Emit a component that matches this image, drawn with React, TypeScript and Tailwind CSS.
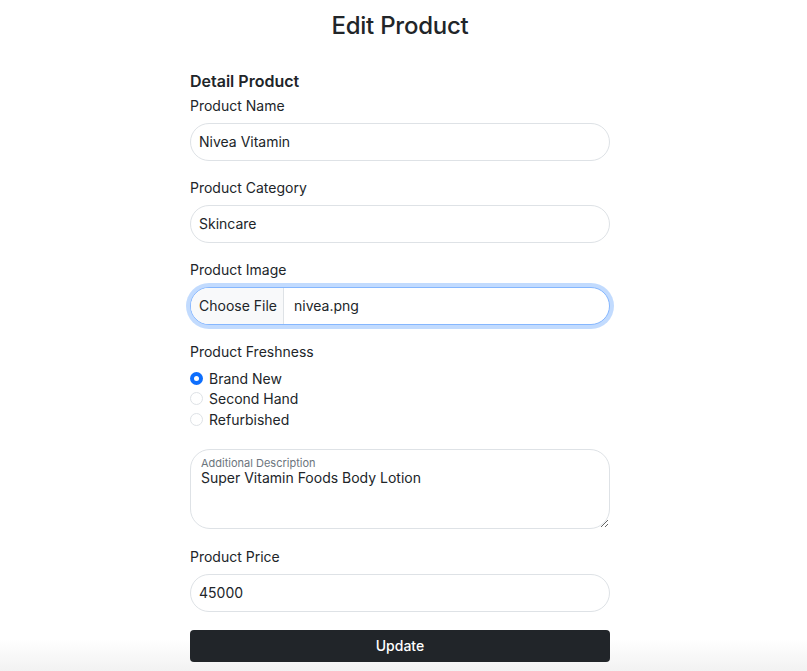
import { useState } from "react";

const font = { fontFamily: "Inter, 'Noto Sans', sans-serif" };

const freshnessOptions = ["Brand New", "Second Hand", "Refurbished"];

function FieldLabel({ children }: { children: React.ReactNode }) {
  return <p className="mb-[7px] text-[14px] leading-[20px] text-[#212529]">{children}</p>;
}

function TextField({ value }: { value: string }) {
  return (
    <div className="flex h-[38px] items-center rounded-full border border-[#dee2e6] bg-white px-[8px] pb-px text-[14px] text-[#212529]">
      {value}
    </div>
  );
}

export default function App() {
  const [freshness, setFreshness] = useState("Brand New");

  return (
    <div className="relative min-h-[671px] bg-white pr-[7px] text-[#212529]" style={font}>
      <div className="pointer-events-none absolute inset-x-0 bottom-0 h-[32px] bg-linear-to-b from-white/0 to-[#f2f2f2]" />

      <div className="relative z-10 mx-auto w-[420px] pt-[8px]">
        <h1 className="text-center text-[24px] font-medium leading-[36px] tracking-[-0.01em]">Edit Product</h1>

        <h2 className="mt-[25px] text-[16px] font-semibold leading-[24px]">Detail Product</h2>

        <div className="mt-[3px] flex flex-col gap-[17px]">
          <div>
            <FieldLabel>Product Name</FieldLabel>
            <TextField value="Nivea Vitamin" />
          </div>

          <div>
            <FieldLabel>Product Category</FieldLabel>
            <TextField value="Skincare" />
          </div>

          <div>
            <FieldLabel>Product Image</FieldLabel>
            <div className="flex h-[38px] items-stretch overflow-hidden rounded-full border border-[#86b7fe] bg-white text-[14px] shadow-[0_0_0_4px_rgba(13,110,253,0.25)]">
              <span className="flex items-center border-r border-[#dee2e6] bg-[#f8f9fa] pb-px pl-[8px] pr-[6px]">Choose File</span>
              <span className="flex items-center pb-px pl-[10px]">nivea.png</span>
            </div>
          </div>

          <div>
            <FieldLabel>Product Freshness</FieldLabel>
            <div className="-mt-px flex flex-col">
              {freshnessOptions.map((opt) => {
                const checked = freshness === opt;
                return (
                  <label
                    key={opt}
                    className="flex h-[20.5px] cursor-pointer items-center gap-[6px] text-[14px]"
                    onClick={() => setFreshness(opt)}
                  >
                    <span
                      className={
                        checked
                          ? "flex h-[13px] w-[13px] items-center justify-center rounded-full bg-[#0d6efd]"
                          : "h-[13px] w-[13px] rounded-full border border-[#dee2e6] bg-white"
                      }
                    >
                      {checked && <span className="h-[5px] w-[5px] rounded-full bg-white" />}
                    </span>
                    {opt}
                  </label>
                );
              })}
            </div>
          </div>

          <div className="relative mt-[2px]">
            <span className="pointer-events-none absolute left-[11px] top-[7px] text-[11px] leading-[14px] text-[#6c757d]">
              Additional Description
            </span>
            <textarea
              className="block h-[80px] w-full resize-y rounded-[20px] border border-[#dee2e6] bg-white px-[10px] pt-[19px] text-[14px] leading-[18px] text-[#212529] outline-none"
              defaultValue="Super Vitamin Foods Body Lotion"
            />
          </div>

          <div className="mt-px">
            <FieldLabel>Product Price</FieldLabel>
            <TextField value="45000" />
          </div>
        </div>

        <button className="mt-[18px] flex h-[32px] w-full items-center justify-center rounded-[4px] bg-[#212529] text-[14px] font-medium text-white">
          Update
        </button>
      </div>
    </div>
  );
}
